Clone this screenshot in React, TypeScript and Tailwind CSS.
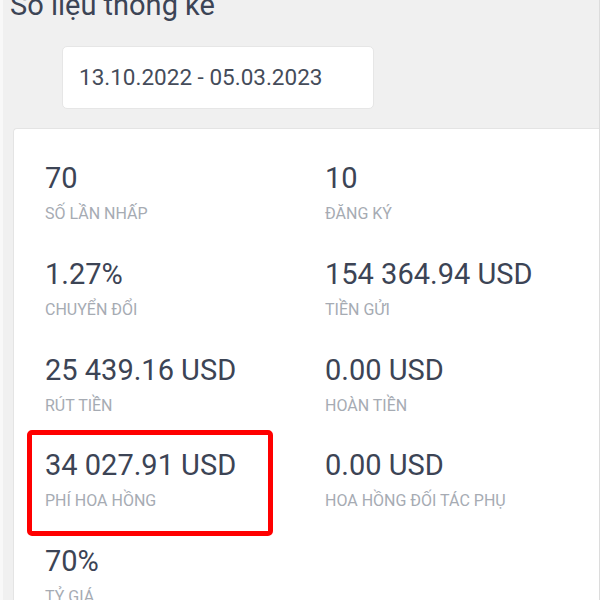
const stats = [
  { value: "70", label: "SỐ LẦN NHẤP" },
  { value: "10", label: "ĐĂNG KÝ" },
  { value: "1.27%", label: "CHUYỂN ĐỔI" },
  { value: "154 364.94 USD", label: "TIỀN GỬI" },
  { value: "25 439.16 USD", label: "RÚT TIỀN" },
  { value: "0.00 USD", label: "HOÀN TIỀN" },
  { value: "34 027.91 USD", label: "PHÍ HOA HỒNG", marked: true },
  { value: "0.00 USD", label: "HOA HỒNG ĐỐI TÁC PHỤ" },
  { value: "70%", label: "TỶ GIÁ" },
];

export default function App() {
  return (
    <main
      className="h-[600px] w-[600px] overflow-hidden bg-[#f0f0f0] border-l-[3px] border-l-[#f8f8f8] border-r border-r-[#dcdcdc]"
      style={{ fontFamily: "Roboto, 'Noto Sans', sans-serif" }}
    >
      <h1 className="-mt-[12px] ml-[7px] text-[29px] leading-[35px] text-[#3c4455]">
        Số liệu thống kê
      </h1>

      <div className="mt-[23px] ml-[59px] w-[312px] h-[63px] flex items-center pl-[16px] bg-white rounded-[5px] border border-[#e6e6e6]">
        <span className="text-[22.5px] text-[#454c5a]">13.10.2022 - 05.03.2023</span>
      </div>

      <section className="mt-[19px] ml-[10px] bg-white rounded-tl-[4px] border-l border-t border-[#e4e4e4] pt-[32px] pl-[31px] h-[600px]">
        <div className="grid grid-cols-[280px_1fr] gap-y-[32.75px]">
          {stats.map((s, i) => (
            <div key={i} className="relative">
              {s.marked && (
                <div className="absolute -left-[18px] -top-[18px] w-[246px] h-[106px] border-[5px] border-[#ff0000] rounded-[5px]" />
              )}
              <div className="text-[29px] leading-[34px] text-[#3c4455]">{s.value}</div>
              <div className="mt-[9px] text-[16px] leading-5 text-[#a6abb3]">{s.label}</div>
            </div>
          ))}
        </div>
      </section>
    </main>
  );
}
